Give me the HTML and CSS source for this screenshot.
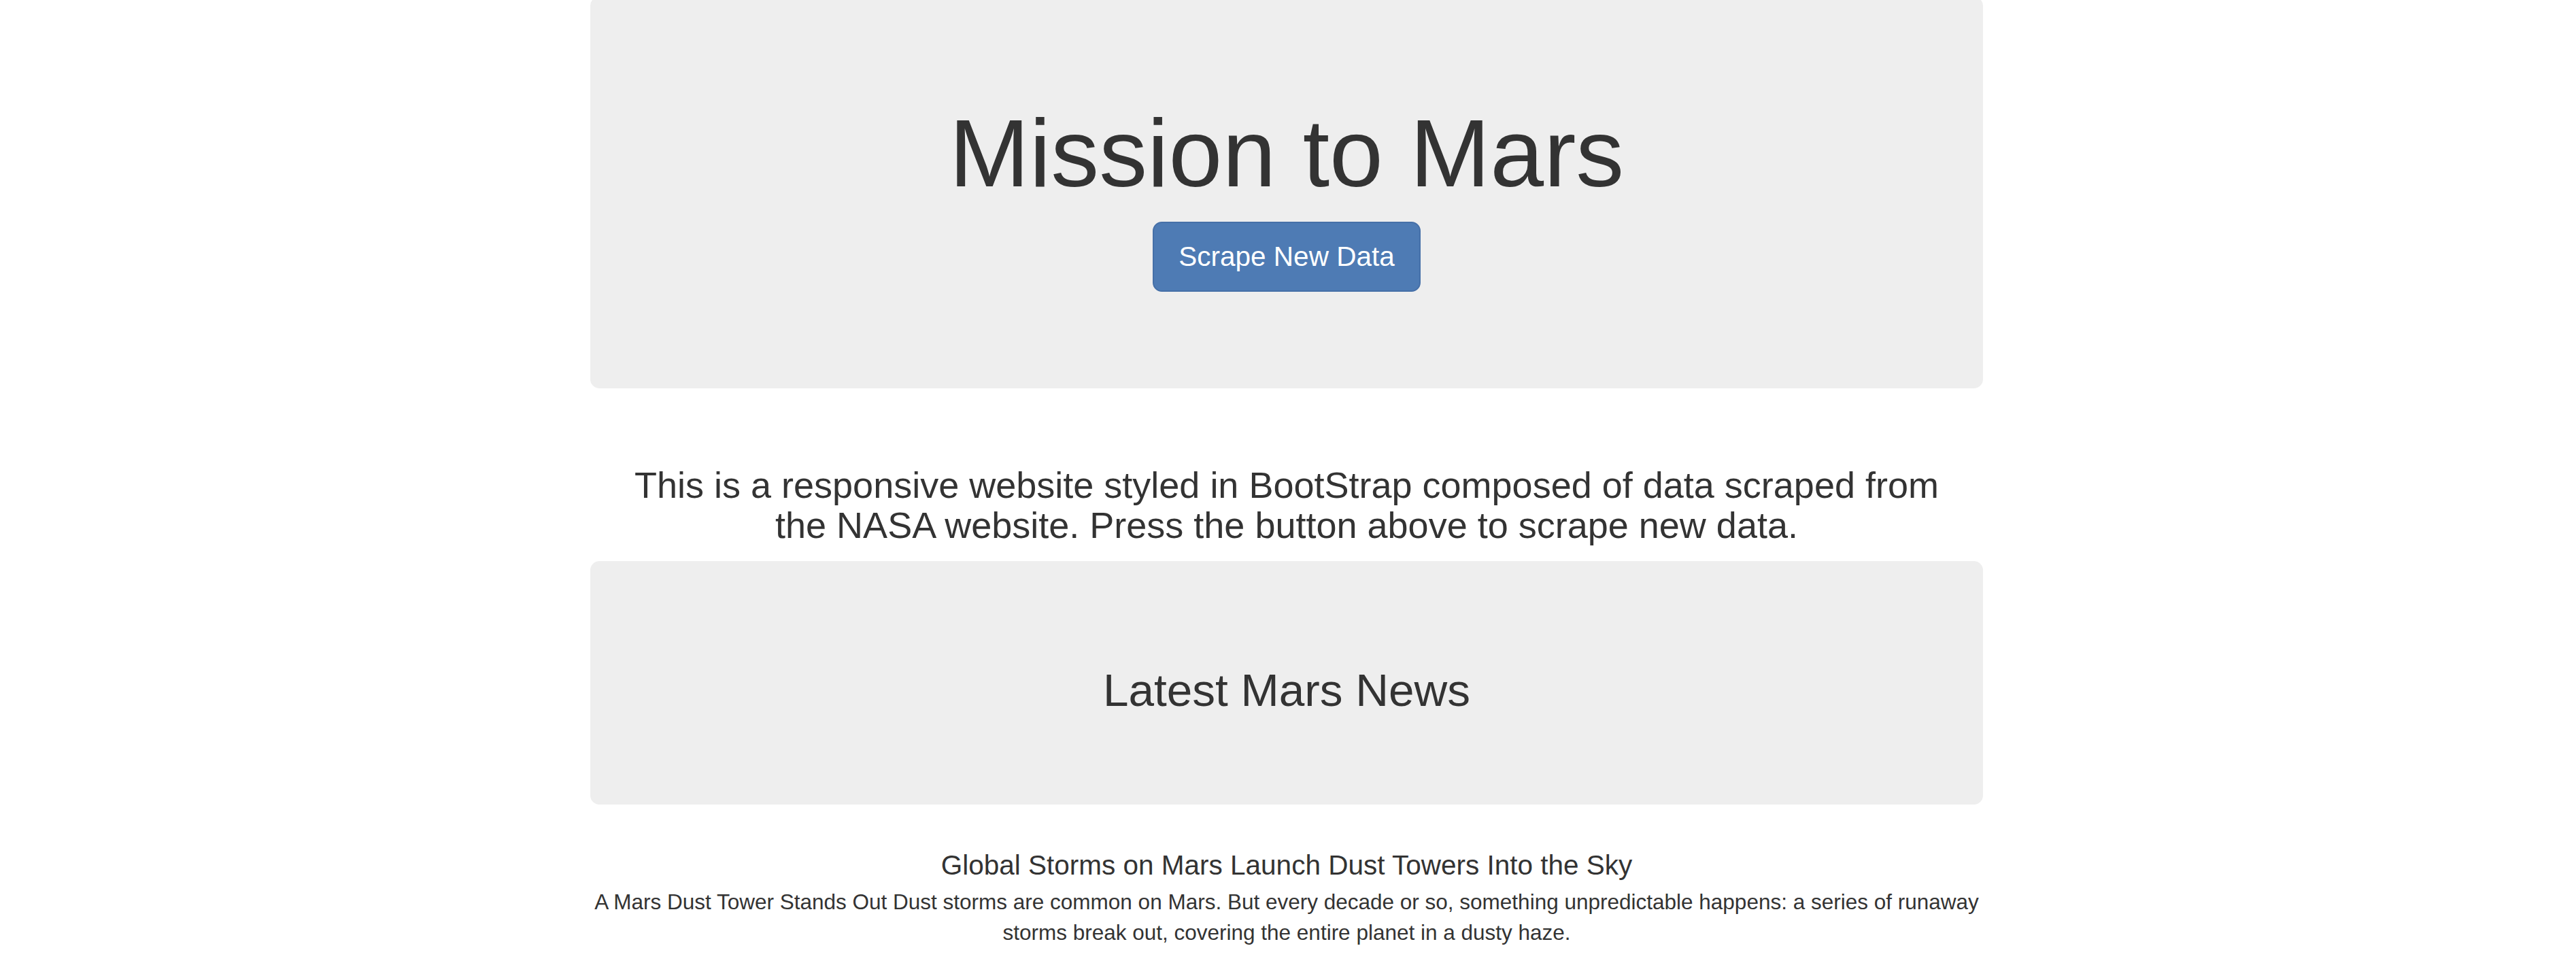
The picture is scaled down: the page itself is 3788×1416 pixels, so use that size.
FILE: index.html
```html
<!DOCTYPE html>
<html lang="en">
<head>
<meta charset="utf-8">
<title>Mission to Mars</title>
<link rel="stylesheet" href="styles.css">
</head>
<body>
<div class="container">
  <div class="jumbotron jumbotron-top">
    <h1 class="title">Mission to Mars</h1>
    <p class="lead-p"><a class="btn" href="#">Scrape New Data</a></p>
  </div>
  <h3 class="intro">This is a responsive website styled in BootStrap composed of data scraped from the NASA website. Press the button above to scrape new data.</h3>
  <div class="jumbotron jumbotron-news">
    <h2 class="section-title">Latest Mars News</h2>
  </div>
  <h4 class="news-title">Global Storms on Mars Launch Dust Towers Into the Sky</h4>
  <p class="news-body">A Mars Dust Tower Stands Out Dust storms are common on Mars. But every decade or so, something unpredictable happens: a series of runaway storms break out, covering the entire planet in a dusty haze.</p>
</div>
</body>
</html>
```

FILE: styles.css
```css
html, body {
  margin: 0;
  padding: 0;
  background: #fff;
}

body {
  font-family: "Liberation Sans", Arial, Helvetica, sans-serif;
  color: #333;
  padding-right: 4px;
}

.container {
  width: 2048px;
  margin: 0 auto;
  display: flex;
  flex-direction: column;
  text-align: center;
}

.jumbotron {
  background: #eeeeee;
  border-radius: 13.5px;
  padding: 108px 135px;
}

.jumbotron-top {
  margin-top: -5px;
}

.title {
  font-size: 141.75px;
  line-height: 1.1;
  font-weight: 400;
  margin: 45px 0 22.5px;
}

.lead-p {
  font-size: 47.25px;
  line-height: 1.428571;
  margin: 0 0 33.75px;
}

.btn {
  display: inline-block;
  font-size: 40.5px;
  line-height: 1.3333;
  padding: 22.5px 36px;
  border: 2px solid #4670a8;
  border-radius: 13.5px;
  background: #4e7bb4;
  color: #fff;
  text-decoration: none;
  vertical-align: baseline;
}

.intro {
  font-size: 54px;
  line-height: 1.1;
  font-weight: 400;
  margin: 112.5px 0 22.5px;
  padding: 0 34px;
}

.section-title {
  font-size: 67.5px;
  line-height: 1.1;
  font-weight: 400;
  margin: 45px 0 22.5px;
}

.news-title {
  font-size: 40.5px;
  line-height: 1.1;
  font-weight: 400;
  margin: 67.5px 0 9.5px;
}

.news-body {
  font-size: 31.5px;
  line-height: 45px;
  margin: 0;
}
```
